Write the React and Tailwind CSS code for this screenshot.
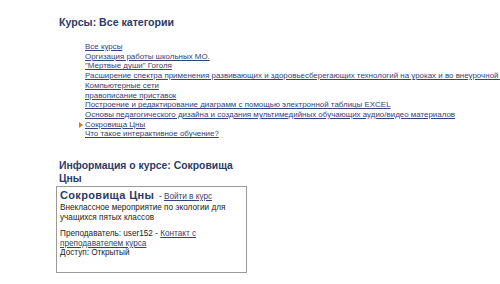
export default function App() {
  const items = [
    "Все курсы",
    "Оргизация работы школьных МО.",
    "\"Мертвые души\" Гоголя",
    "Расширение спектра применения развивающих и здоровьесберегающих технологий на уроках и во внеурочной деятельности",
    "Компьютерные сети",
    "правописание приставок",
    "Построение и редактирование диаграмм с помощью электронной таблицы EXCEL",
    "Основы педагогического дизайна и создания мультимедийных обучающих аудио/видео материалов",
    "Сокровища Цны",
    "Что такое интерактивное обучение?",
  ];
  return (
    <div className="w-[500px] h-[284px] overflow-hidden bg-white" style={{ fontFamily: '"Liberation Sans", Arial, sans-serif' }}>
      <div className="pl-[59px] pt-[15px]">
        <h1 className="text-[10.6px] font-bold text-[#2b3a6b] leading-[14px]">Курсы: Все категории</h1>
        <ul className="mt-[13px] pl-[26px] text-[7.95px] leading-[9.7px] text-[#34427a]">
          {items.map((t, i) => (
            <li key={i} className="relative whitespace-nowrap">
              {t === "Сокровища Цны" && (
                <span className="absolute left-[-6px] top-[2px] w-0 h-0 border-l-[4px] border-l-[#e07a10] border-y-[3px] border-y-transparent" />
              )}
              <span className="underline">{t}</span>
            </li>
          ))}
        </ul>
        <h2 className="mt-[20px] w-[190px] text-[10.4px] font-bold text-[#2b3a6b] leading-[13px]">Информация о курсе: Сокровища Цны</h2>
        <div className="mt-[1px] ml-[-3px] w-[191px] h-[87px] border border-[#9a9a9a] px-[3px] pt-[2px] text-[8.2px] leading-[9.5px] text-[#222]">
          <div className="leading-[13px] whitespace-nowrap">
            <span className="text-[11px] font-bold text-[#2b3a6b] tracking-[0.35px]">Сокровища Цны</span>
            <span className="text-[8.2px] text-[#2b3a6b]"> &nbsp;- </span>
            <span className="text-[8.2px] underline text-[#34427a]">Войти в курс</span>
          </div>
          <div>Внеклассное мероприятие по экологии для учащихся пятых классов</div>
          <div className="mt-[7px] leading-[9.6px]">
            Преподаватель: user152 - <span className="underline text-[#34427a]">Контакт с преподавателем курса</span>
          </div>
          <div>Доступ: Открытый</div>
        </div>
      </div>
    </div>
  );
}
